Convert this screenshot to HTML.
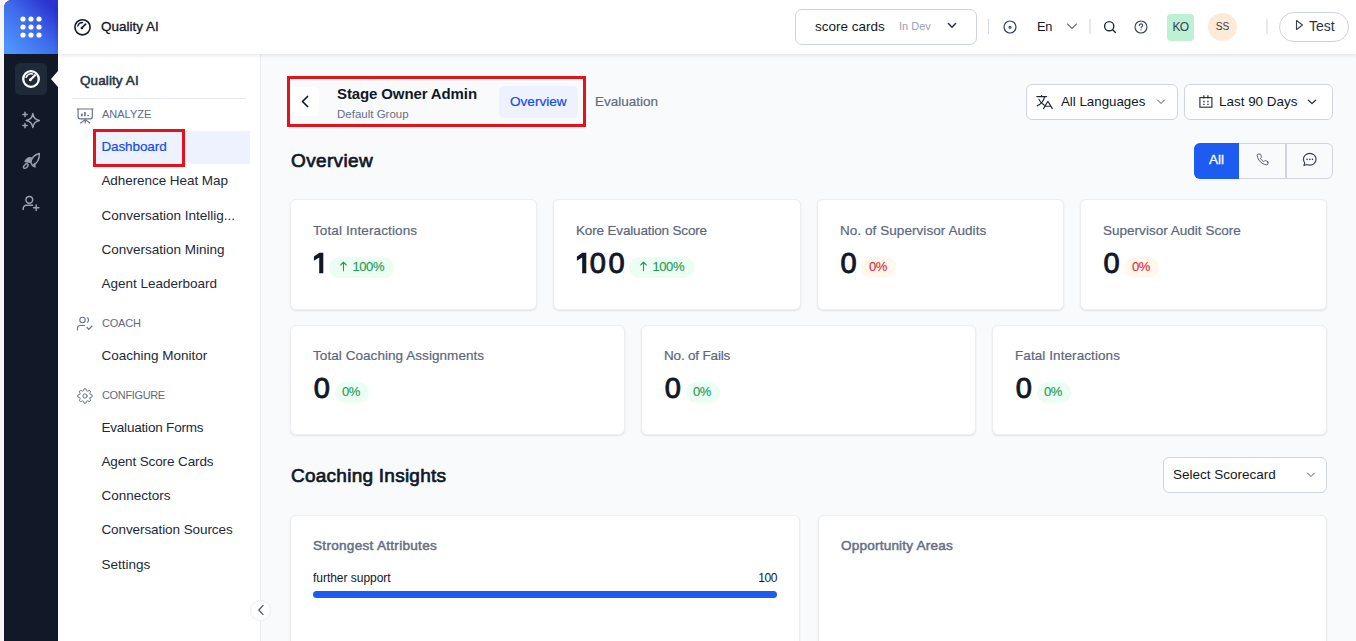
<!DOCTYPE html>
<html>
<head>
<meta charset="utf-8">
<title>Quality AI</title>
<style>
*{box-sizing:border-box;margin:0;padding:0}
html,body{width:1356px;height:641px;overflow:hidden;background:#f6f6f6;font-family:"Liberation Sans",sans-serif;color:#101828}
.abs{position:absolute}
.t{position:absolute;white-space:nowrap;line-height:1}
#rail{left:4px;top:0;width:54px;height:641px;background:#111827;border-top-left-radius:8px}
#logo{left:4px;top:0;width:54px;height:54px;border-top-left-radius:8px;background:linear-gradient(45deg,#4f95fb 8%,#3f6ded 50%,#2b33d1 88%)}
#topbar{left:58px;top:0;width:1298px;height:54px;background:#fff;box-shadow:0 1px 4px rgba(16,24,40,.12);z-index:5}
#side{left:58px;top:54px;width:203px;height:587px;background:#fff;border-right:1px solid #e9ebf0}
#main{left:261px;top:54px;width:1095px;height:587px;background:#f9fafb}
.nav{font-size:13.5px;color:#1d2939;left:101.4px}
.sec{font-size:11px;color:#5d6b82;left:102px;letter-spacing:0}
.card{position:absolute;background:#fff;border:1px solid #eceef2;border-radius:6px;box-shadow:0 1px 2px rgba(16,24,40,.10)}
.lbl{font-size:13.5px;color:#5a677d;-webkit-text-stroke:.2px #5a677d}
.num{font-size:29px;color:#101828;font-weight:400;-webkit-text-stroke:.95px #101828}
.pill{position:absolute;height:21px;border-radius:10.5px;font-size:13px;line-height:21px;white-space:nowrap;letter-spacing:-.4px}
.pill span{position:absolute;top:-1px;left:0}
.pill svg{position:absolute;left:9.5px;top:4px}
.g{background:#ecfdf3;color:#1f9d55;-webkit-text-stroke:.15px #1f9d55}
.r{background:#fff8eb;color:#e0294a;-webkit-text-stroke:.15px #e0294a}
.dd{position:absolute;background:#fff;border:1px solid #d0d5dd;border-radius:6px}
</style>
</head>
<body>
<div id="app" style="position:relative;width:1356px;height:641px;overflow:hidden;background:#f6f6f6">
<div class="abs" id="rail"></div>
<div class="abs" id="logo"></div>
<div class="abs" id="topbar"></div>
<div class="abs" id="side"></div>
<div class="abs" id="main"></div>

<!-- logo dots -->
<svg class="abs" style="left:18.3px;top:14.4px" width="26" height="26" viewBox="0 0 26 26" fill="#fff">
<circle cx="5" cy="5" r="2.6"/><circle cx="13" cy="5" r="2.6"/><circle cx="21" cy="5" r="2.6"/>
<circle cx="5" cy="13" r="2.6"/><circle cx="13" cy="13" r="2.6"/><circle cx="21" cy="13" r="2.6"/>
<circle cx="5" cy="21" r="2.6"/><circle cx="13" cy="21" r="2.6"/><circle cx="21" cy="21" r="2.6"/>
</svg>
<!-- active tile -->
<div class="abs" style="left:15px;top:63px;width:32px;height:32px;border-radius:5px;background:#1f2937"></div>
<!-- notch -->
<svg class="abs" style="left:50px;top:71px" width="8" height="16" viewBox="0 0 8 16"><path d="M8 0 L1 8 L8 16 Z" fill="#fff"/></svg>
<!-- gauge active -->
<svg class="abs" style="left:21px;top:69px" width="20" height="20" viewBox="0 0 20 20" fill="none" stroke="#fff" stroke-width="2.3" stroke-linecap="round">
<circle cx="10" cy="10" r="7.8"/><path d="M5.2 8.2 A5.2 5.2 0 0 1 11.5 5" stroke-width="1.6"/><path d="M9.2 11 L14 6.2" stroke-width="2.2"/><circle cx="9.4" cy="10.8" r="1.4" fill="#fff" stroke="none"/>
</svg>
<!-- sparkle -->
<svg class="abs" style="left:20px;top:110px" width="22" height="22" viewBox="0 0 22 22" fill="none" stroke="#98a2b3" stroke-width="1.5" stroke-linejoin="round" stroke-linecap="round">
<path d="M12.8 3.6 Q13.6 9.4 19.4 10.4 Q13.6 11.4 12.8 17.4 Q12 11.4 6.2 10.4 Q12 9.4 12.8 3.6 Z"/>
<path d="M5 2.2 V6.6 M2.8 4.4 H7.2"/><path d="M5 13.4 V17.8 M2.8 15.6 H7.2"/>
</svg>
<!-- rocket -->
<svg class="abs" style="left:20px;top:150px" width="22" height="22" viewBox="0 0 22 22" fill="none" stroke="#98a2b3" stroke-width="1.4" stroke-linejoin="round" stroke-linecap="round">
<path d="M19.4 3.5 C14.6 4.6 11.4 8.2 10.9 12.6 L12.5 15.6 C16.8 13.6 19.6 9.2 19.4 3.5 Z"/>
<path d="M11.2 7.6 C8.2 7 5.6 8.8 4.8 11.8 L10 12.4 Z" fill="#98a2b3" stroke-width="1"/>
<path d="M14.6 13.4 L15 17 L13.2 15.8"/>
<ellipse cx="5.8" cy="16.1" rx="2.7" ry="1.6" transform="rotate(-42 5.8 16.1)"/>
</svg>
<!-- user plus -->
<svg class="abs" style="left:20px;top:192px" width="22" height="22" viewBox="0 0 22 22" fill="none" stroke="#98a2b3" stroke-width="1.5" stroke-linecap="round" stroke-linejoin="round">
<circle cx="9.3" cy="7.8" r="3.4"/><path d="M3.2 17.6 V16.5 C3.2 14.7 4.6 13.3 6.4 13.3 H12.6"/><path d="M16.2 13 V18.4 M13.5 15.7 H18.9"/>
</svg>
<div class="abs" style="z-index:6;left:0;top:0;width:1356px;height:54px">
<!-- gauge icon -->
<svg class="abs" style="left:73px;top:18px" width="19" height="19" viewBox="0 0 19 19" fill="none" stroke="#101828" stroke-width="1.6" stroke-linecap="round">
<circle cx="9.5" cy="9.3" r="7.6"/><path d="M4.8 8.2 A5 5 0 0 1 9.6 4.5" stroke-width="1.3"/><path d="M8.8 10 L12.6 6.2" stroke-width="1.7"/><circle cx="8.9" cy="9.9" r="1.25" fill="#101828" stroke="none"/>
</svg>
<div class="t" style="left:101px;top:20px;font-size:13.5px;color:#101828;-webkit-text-stroke:.3px #101828">Quality AI</div>
<!-- score cards dropdown -->
<div class="abs" style="left:795px;top:9px;width:182px;height:36px;border:1px solid #cfd4dc;border-radius:7px;background:#fff"></div>
<div class="t" style="left:815px;top:20px;font-size:13.5px;color:#101828">score cards</div>
<div class="t" style="left:899px;top:21px;font-size:11px;color:#98a2b3">In Dev</div>
<svg class="abs" style="left:946px;top:21px" width="12" height="9" viewBox="0 0 12 9" fill="none" stroke="#1d2939" stroke-width="1.4" stroke-linecap="round" stroke-linejoin="round"><path d="M2.4 2.6 L6 6.2 L9.6 2.6"/></svg>
<div class="abs" style="left:988px;top:19px;width:1px;height:15px;background:#d3d9e8"></div>
<!-- target icon -->
<svg class="abs" style="left:1003px;top:20px" width="14" height="14" viewBox="0 0 14 14" fill="none" stroke="#344054" stroke-width="1.2"><circle cx="7" cy="7" r="6"/><circle cx="7" cy="7.2" r="1" stroke-width="1.1"/></svg>
<div class="t" style="left:1037px;top:20.6px;font-size:12.8px;color:#101828;letter-spacing:-.3px">En</div>
<svg class="abs" style="left:1066px;top:22px" width="12" height="9" viewBox="0 0 12 9" fill="none" stroke="#344054" stroke-width="1.05" stroke-linecap="round" stroke-linejoin="round"><path d="M1.5 2 L6 6.5 L10.5 2"/></svg>
<div class="abs" style="left:1089px;top:19px;width:2px;height:15px;background:#e3e8f4"></div>
<!-- search -->
<svg class="abs" style="left:1103px;top:20px" width="14" height="14" viewBox="0 0 14 14" fill="none" stroke="#1d2939" stroke-width="1.4" stroke-linecap="round"><circle cx="6.2" cy="6.2" r="4.6"/><path d="M9.7 9.7 L12.4 12.4"/></svg>
<!-- help -->
<svg class="abs" style="left:1134px;top:20px" width="14" height="14" viewBox="0 0 14 14" fill="none" stroke="#344054" stroke-width="1.1" stroke-linecap="round"><circle cx="7" cy="7" r="6"/><path d="M5.3 5.6 C5.3 4.5 6.1 3.9 7 3.9 C8 3.9 8.7 4.6 8.7 5.4 C8.7 6.6 7 6.7 7 8"/><circle cx="7" cy="9.9" r=".6" fill="#344054" stroke="none"/></svg>
<!-- KO -->
<div class="abs" style="left:1167px;top:14px;width:27px;height:27px;border-radius:4px;background:#bdf0d5"></div>
<div class="t" style="left:1166.8px;top:21px;width:27px;text-align:center;font-size:12px;letter-spacing:-.8px;color:#344054">KO</div>
<!-- SS -->
<div class="abs" style="left:1208px;top:13px;width:29px;height:28px;border-radius:50%;background:#feead9"></div>
<div class="t" style="left:1208px;top:21.5px;width:29px;text-align:center;font-size:10.2px;color:#344054">SS</div>
<div class="abs" style="left:1266px;top:19px;width:2px;height:15px;background:#ece6ee"></div>
<!-- Test -->
<div class="abs" style="left:1279px;top:12px;width:70px;height:30px;border:1px solid #cfd4dc;border-radius:15px;background:#fff"></div>
<svg class="abs" style="left:1295px;top:19px" width="9" height="12" viewBox="0 0 9 12" fill="none" stroke="#344054" stroke-width="1.1" stroke-linejoin="round"><path d="M1.5 1.5 L7.5 6 L1.5 10.5 Z"/></svg>
<div class="t" style="left:1309px;top:19px;font-size:14px;color:#2b3648">Test</div>
</div>


<div class="t" style="left:80px;top:74px;font-size:13.5px;color:#2a3547;-webkit-text-stroke:.55px #2a3547;letter-spacing:.1px">Quality AI</div>
<div class="abs" style="left:72px;top:98px;width:174px;height:1px;background:#e4e7ec"></div>
<!-- analyze icon -->
<svg class="abs" style="left:76px;top:107px" width="19" height="18" viewBox="0 0 19 18" fill="none" stroke="#667085" stroke-width="1.15" stroke-linecap="round" stroke-linejoin="round">
<path d="M1.4 2 H17"/><path d="M2.1 2 V9.8 Q2.1 11.8 4.1 11.8 H14.3 Q16.3 11.8 16.3 9.8 V2"/>
<path d="M9.2 12 V16 M9.2 12.6 L4.6 16 M9.2 12.6 L13.8 16"/>
<path d="M5.9 9.3 V6.6 M8.9 9.3 V5 M12.1 9.3 V8" stroke-width="1.6" stroke-linecap="butt"/>
</svg>
<div class="t sec" style="top:109px">ANALYZE</div>
<div class="abs" style="left:93px;top:131px;width:157px;height:33px;background:#eef2ff"></div>
<div class="t nav" style="top:140px;color:#0f4cf0;-webkit-text-stroke:.2px #0f4cf0;letter-spacing:-0.10px">Dashboard</div>
<div class="abs" style="left:93px;top:129px;width:92px;height:38px;border:3px solid #e5121b"></div>
<div class="t nav" style="top:174px;letter-spacing:-0.06px">Adherence Heat Map</div>
<div class="t nav" style="top:209px">Conversation Intellig...</div>
<div class="t nav" style="top:243px">Conversation Mining</div>
<div class="t nav" style="top:277px">Agent Leaderboard</div>
<!-- coach icon -->
<svg class="abs" style="left:76px;top:316px" width="18" height="16" viewBox="0 0 18 16" fill="none" stroke="#667085" stroke-width="1.1" stroke-linecap="round" stroke-linejoin="round">
<circle cx="6.5" cy="4" r="2.7"/><path d="M1.5 14 V12.5 C1.5 10.8 2.8 9.5 4.5 9.5 H8.5"/><path d="M11.5 1.8 C12.8 2.6 12.8 5.4 11.5 6.2"/><path d="M11 11.5 L12.8 13.3 L16 10"/>
</svg>
<div class="t sec" style="top:318px;letter-spacing:-.2px">COACH</div>
<div class="t nav" style="top:349px">Coaching Monitor</div>
<!-- gear icon -->
<svg class="abs" style="left:77px;top:388px" width="16" height="16" viewBox="0 0 24 24" fill="none" stroke="#667085" stroke-width="1.5" stroke-linecap="round" stroke-linejoin="round">
<circle cx="12" cy="12" r="3.2"/>
<path d="M19.4 15a1.65 1.65 0 0 0 .33 1.82l.06.06a2 2 0 1 1-2.83 2.83l-.06-.06a1.65 1.65 0 0 0-1.82-.33 1.65 1.65 0 0 0-1 1.51V21a2 2 0 1 1-4 0v-.09A1.65 1.65 0 0 0 9 19.4a1.65 1.65 0 0 0-1.82.33l-.06.06a2 2 0 1 1-2.83-2.83l.06-.06a1.65 1.65 0 0 0 .33-1.82 1.65 1.65 0 0 0-1.51-1H3a2 2 0 1 1 0-4h.09A1.65 1.65 0 0 0 4.6 9a1.65 1.65 0 0 0-.33-1.82l-.06-.06a2 2 0 1 1 2.83-2.83l.06.06a1.65 1.65 0 0 0 1.82.33H9a1.65 1.65 0 0 0 1-1.51V3a2 2 0 1 1 4 0v.09a1.65 1.65 0 0 0 1 1.51 1.65 1.65 0 0 0 1.82-.33l.06-.06a2 2 0 1 1 2.83 2.83l-.06.06a1.65 1.65 0 0 0-.33 1.82V9a1.65 1.65 0 0 0 1.51 1H21a2 2 0 1 1 0 4h-.09a1.65 1.65 0 0 0-1.51 1z"/>
</svg>
<div class="t sec" style="top:390px;letter-spacing:-.35px">CONFIGURE</div>
<div class="t nav" style="top:421px;letter-spacing:-0.19px">Evaluation Forms</div>
<div class="t nav" style="top:455px;letter-spacing:-0.12px">Agent Score Cards</div>
<div class="t nav" style="top:489px">Connectors</div>
<div class="t nav" style="top:523px;letter-spacing:-0.08px">Conversation Sources</div>
<div class="t nav" style="top:558px">Settings</div>
<!-- collapse -->
<div class="abs" style="left:250px;top:600px;width:21px;height:21px;border-radius:50%;background:#fff;border:1px solid #eceef2;z-index:4"></div>
<svg class="abs" style="left:257px;top:604px;z-index:4" width="8" height="12" viewBox="0 0 8 12" fill="none" stroke="#475467" stroke-width="1.1" stroke-linecap="round" stroke-linejoin="round"><path d="M6 1.5 L1.8 6 L6 10.5"/></svg>


<!-- header row -->
<div class="abs" style="left:290px;top:87px;width:29px;height:29px;border-radius:5px;background:#fff"></div>
<svg class="abs" style="left:300px;top:95px" width="10" height="13" viewBox="0 0 10 13" fill="none" stroke="#101828" stroke-width="1.7" stroke-linecap="round" stroke-linejoin="round"><path d="M7.5 1.5 L2.5 6.5 L7.5 11.5"/></svg>
<div class="t" style="left:337px;top:86px;font-size:15px;font-weight:700;color:#101828;letter-spacing:-.12px">Stage Owner Admin</div>
<div class="t" style="left:337px;top:109px;font-size:11.5px;color:#667085">Default Group</div>
<div class="abs" style="left:499px;top:86px;width:79px;height:32px;border-radius:5px;background:#eef2ff"></div>
<div class="t" style="left:510px;top:95px;font-size:13.6px;color:#0f4cf0;-webkit-text-stroke:.2px #0f4cf0">Overview</div>
<div class="t" style="left:595px;top:95px;font-size:13.5px;color:#5f6c82;-webkit-text-stroke:.2px #5f6c82">Evaluation</div>
<div class="abs" style="left:287px;top:76px;width:299px;height:51px;border:3px solid #e5121b"></div>
<!-- All Languages -->
<div class="dd" style="left:1026px;top:84px;width:152px;height:36px"></div>
<svg class="abs" style="left:1036px;top:95px" width="18" height="16" viewBox="0 0 18 16" fill="none" stroke="#1d2939" stroke-width="1.15" stroke-linecap="round" stroke-linejoin="round">
<path d="M.8 1.6 H10.6"/><path d="M5.6 .4 V1.6"/><path d="M8.6 1.6 C7.8 5.6 5 9 1.2 10.8"/><path d="M3 4.4 C4 7 6 9 8.4 10.2"/>
<path d="M7.5 13.6 L11.9 6.3 L16.3 13.6"/><path d="M9 11.2 H14.8"/>
</svg>
<div class="t" style="left:1061px;top:95px;font-size:13.3px;color:#101828">All Languages</div>
<svg class="abs" style="left:1156px;top:98px" width="10" height="8" viewBox="0 0 10 8" fill="none" stroke="#475467" stroke-width="1" stroke-linecap="round" stroke-linejoin="round"><path d="M1.5 2 L5 5.5 L8.5 2"/></svg>
<!-- Last 90 Days -->
<div class="dd" style="left:1184px;top:84px;width:149px;height:36px"></div>
<svg class="abs" style="left:1198px;top:94px" width="16" height="15" viewBox="0 0 16 15" fill="none" stroke="#1d2939" stroke-width="1.1" stroke-linejoin="miter" stroke-linecap="butt">
<rect x="1.9" y="3.6" width="12" height="9.6"/><path d="M5.9 1.2 V4.6 M9.9 1.2 V4.6"/><path d="M5.3 7.5 H6.6 M9.3 7.5 H10.6 M5.3 10.3 H6.6 M9.3 10.3 H10.6" stroke-width="1.3"/>
</svg>
<div class="t" style="left:1219px;top:95px;font-size:13.45px;color:#101828">Last 90 Days</div>
<svg class="abs" style="left:1307px;top:98px" width="10" height="8" viewBox="0 0 10 8" fill="none" stroke="#1d2939" stroke-width="1.2" stroke-linecap="round" stroke-linejoin="round"><path d="M1.4 2.2 L5 5.6 L8.6 2.2"/></svg>
<!-- Overview heading -->
<div class="t" style="left:291px;top:151px;font-size:19px;color:#101828;-webkit-text-stroke:.7px #101828;letter-spacing:.35px">Overview</div>
<!-- segmented -->
<div class="abs" style="left:1194px;top:143px;width:139px;height:36px;border:1px solid #d0d5dd;border-radius:6px;background:#f9fafb"></div>
<div class="abs" style="left:1194px;top:143px;width:45px;height:36px;border-radius:6px 0 0 6px;background:#1c5cf0"></div>
<div class="t" style="left:1194px;top:153px;width:45px;text-align:center;font-size:13.5px;color:#fff;-webkit-text-stroke:.3px #fff">All</div>
<div class="abs" style="left:1285px;top:144px;width:2px;height:34px;background:#d0d5dd"></div>
<svg class="abs" style="left:1256px;top:153px" width="13" height="13" viewBox="0 0 24 24" fill="none" stroke="#475467" stroke-width="1.7" stroke-linecap="round" stroke-linejoin="round"><path d="M22 16.92v3a2 2 0 0 1-2.18 2 19.79 19.79 0 0 1-8.63-3.07 19.5 19.5 0 0 1-6-6 19.79 19.79 0 0 1-3.07-8.67A2 2 0 0 1 4.11 2h3a2 2 0 0 1 2 1.72 12.84 12.84 0 0 0 .7 2.81 2 2 0 0 1-.45 2.11L8.09 9.91a16 16 0 0 0 6 6l1.27-1.27a2 2 0 0 1 2.11-.45 12.84 12.84 0 0 0 2.81.7A2 2 0 0 1 22 16.92z"/></svg>
<svg class="abs" style="left:1302px;top:152px" width="15.5" height="15.5" viewBox="0 0 16 16" fill="none" stroke="#344054" stroke-width="1.2" stroke-linecap="round" stroke-linejoin="round"><path d="M8 1.5 C11.8 1.5 14.5 4.2 14.5 7.5 C14.5 10.8 11.8 13.5 8 13.5 C7 13.5 6 13.3 5.2 12.9 L2 14 L2.8 11.2 C2 10.2 1.5 8.9 1.5 7.5 C1.5 4.2 4.2 1.5 8 1.5 Z"/><path d="M5.2 7.6 H5.3 M8 7.6 H8.1 M10.7 7.6 H10.8" stroke-width="1.6"/></svg>
<!-- row 1 cards -->
<div class="card" style="left:290px;top:199px;width:247px;height:111px"></div>
<div class="card" style="left:553px;top:199px;width:248px;height:111px"></div>
<div class="card" style="left:817px;top:199px;width:247px;height:111px"></div>
<div class="card" style="left:1080px;top:199px;width:247px;height:111px"></div>
<div class="t lbl" style="left:313px;top:224px;letter-spacing:0.12px">Total Interactions</div>
<div class="t lbl" style="left:576px;top:224px;letter-spacing:-0.16px">Kore Evaluation Score</div>
<div class="t lbl" style="left:840px;top:224px;letter-spacing:0.06px">No. of Supervisor Audits</div>
<div class="t lbl" style="left:1103px;top:224px;letter-spacing:0.02px">Supervisor Audit Score</div>
<div class="t num" style="left:313px;top:249px;visibility:hidden">1</div>
<svg class="abs" style="left:313px;top:252px" width="12" height="22" viewBox="0 0 12 22"><path d="M6.3 .8 H10.3 V21.2 H6.2 V5.6 L.9 8.7 V4.6 Z" fill="#101828"/></svg>
<svg class="abs" style="left:576px;top:252px" width="12" height="22" viewBox="0 0 12 22"><path d="M6.3 .8 H10.3 V21.2 H6.2 V5.6 L.9 8.7 V4.6 Z" fill="#101828"/></svg>
<div class="t num" style="left:589.8px;top:249px;letter-spacing:2.5px">00</div>
<div class="t num" style="left:840.6px;top:249px">0</div>
<div class="t num" style="left:1103.6px;top:249px">0</div>
<div class="pill g" style="left:329px;top:257px;width:65px"><svg width="9" height="11" viewBox="0 0 9 11" fill="none" stroke="#1f9d55" stroke-width="1.1" stroke-linecap="round" stroke-linejoin="round"><path d="M4.5 9.8 V1.2 M1.7 4 L4.5 1.2 L7.3 4"/></svg><span style="left:23.4px">100%</span></div>
<div class="pill g" style="left:629px;top:257px;width:65px"><svg width="9" height="11" viewBox="0 0 9 11" fill="none" stroke="#1f9d55" stroke-width="1.1" stroke-linecap="round" stroke-linejoin="round"><path d="M4.5 9.8 V1.2 M1.7 4 L4.5 1.2 L7.3 4"/></svg><span style="left:23.4px">100%</span></div>
<div class="pill r" style="left:861px;top:257px;width:35px"><span style="left:8px">0%</span></div>
<div class="pill r" style="left:1124px;top:257px;width:35px"><span style="left:8px">0%</span></div>
<!-- row 2 cards -->
<div class="card" style="left:290px;top:325px;width:335px;height:110px"></div>
<div class="card" style="left:641px;top:325px;width:335px;height:110px"></div>
<div class="card" style="left:992px;top:325px;width:335px;height:110px"></div>
<div class="t lbl" style="left:313px;top:349px;letter-spacing:0.06px">Total Coaching Assignments</div>
<div class="t lbl" style="left:664px;top:349px;letter-spacing:-0.18px">No. of Fails</div>
<div class="t lbl" style="left:1015px;top:349px;letter-spacing:0.08px">Fatal Interactions</div>
<div class="t num" style="left:313.8px;top:374px">0</div>
<div class="t num" style="left:664.8px;top:374px">0</div>
<div class="t num" style="left:1015.8px;top:374px">0</div>
<div class="pill g" style="left:335px;top:382px;width:34px"><span style="left:7px">0%</span></div>
<div class="pill g" style="left:686px;top:382px;width:34px"><span style="left:7px">0%</span></div>
<div class="pill g" style="left:1037px;top:382px;width:34px"><span style="left:7px">0%</span></div>
<!-- coaching insights -->
<div class="t" style="left:291px;top:466px;font-size:19px;color:#101828;-webkit-text-stroke:.7px #101828;letter-spacing:.25px">Coaching Insights</div>
<div class="dd" style="left:1163px;top:457px;width:164px;height:36px"></div>
<div class="t" style="left:1173px;top:468px;font-size:13.5px;color:#101828">Select Scorecard</div>
<svg class="abs" style="left:1306px;top:471px" width="10" height="8" viewBox="0 0 10 8" fill="none" stroke="#475467" stroke-width=".95" stroke-linecap="round" stroke-linejoin="round"><path d="M1.5 2 L5 5.5 L8.5 2"/></svg>
<div class="card" style="left:290px;top:515px;width:510px;height:140px"></div>
<div class="card" style="left:818px;top:515px;width:509px;height:140px"></div>
<div class="t hh" style="left:313px;top:539px;font-size:13.6px;color:#667085;-webkit-text-stroke:.5px #667085;letter-spacing:.27px">Strongest Attributes</div>
<div class="t hh" style="left:841px;top:539px;font-size:13.6px;color:#667085;-webkit-text-stroke:.5px #667085;letter-spacing:.18px">Opportunity Areas</div>
<div class="t" style="left:313px;top:572px;font-size:12px;color:#101828;letter-spacing:-.03px">further support</div>
<div class="t" style="left:740px;top:572px;width:37px;text-align:right;font-size:12px;color:#101828;letter-spacing:-.4px">100</div>
<div class="abs" style="left:313px;top:591px;width:464px;height:7px;border-radius:4px;background:#1c5cf0"></div>

</div>
</body>
</html>
